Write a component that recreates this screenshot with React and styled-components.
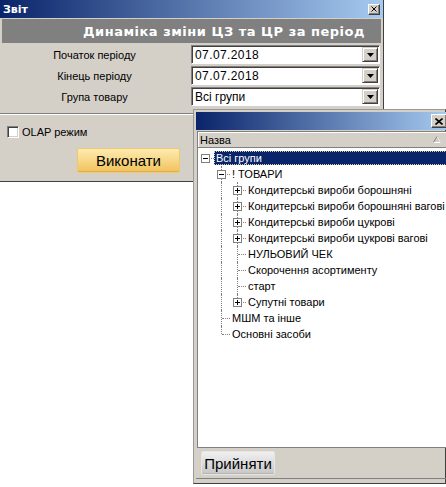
import React from "react";
import styled, { createGlobalStyle } from "styled-components";

const GlobalStyle = createGlobalStyle`
  html, body { margin: 0; padding: 0; background: #fff; }
  body {
    font-family: "Liberation Sans", Arial, sans-serif;
    font-size: 11px;
    color: #000;
  }
`;

const Screen = styled.div`
  position: relative;
  width: 446px;
  height: 487px;
  overflow: hidden;
`;

/* ---------- main report window ---------- */

const MainWindow = styled.div`
  width: 384px;
  height: 182px;
  box-sizing: border-box;
  background: #d4d0c8;
  border-right: 1px solid #404040;
  border-bottom: 1px solid #404040;
  display: flex;
  flex-direction: column;
`;

const TitleBar = styled.div`
  height: 18px;
  flex: none;
  display: flex;
  align-items: center;
  justify-content: space-between;
  padding: 0 ${(p) => p.$padRight}px 0 3px;
  background: linear-gradient(to right, #0a246a, #a6caf0);
  color: #fff;
  font: bold 11px "DejaVu Sans", sans-serif;
`;

const CloseButton = styled.span`
  width: ${(p) => p.$w}px;
  height: ${(p) => p.$h}px;
  box-sizing: border-box;
  background: #d4d0c8;
  border: 1px solid;
  border-color: #fff #404040 #404040 #fff;
  box-shadow: inset -1px -1px #808080;
  display: flex;
  align-items: center;
  justify-content: center;
`;

const ReportHeader = styled.div`
  margin: 1px 2px 0;
  height: 24px;
  background: #808080;
  color: #fff;
  display: flex;
  align-items: center;
  justify-content: flex-end;
  padding-right: 16px;
  font: bold 13px "DejaVu Sans", sans-serif;
  letter-spacing: 0.5px;
`;

const ParamGrid = styled.div`
  margin-top: 2px;
  display: grid;
  grid-template-columns: 189px 189px;
  column-gap: 2px;
  row-gap: 2px;
  grid-auto-rows: 19px;
`;

const ParamLabel = styled.div`
  display: flex;
  align-items: center;
  justify-content: center;
  font-size: 11px;
`;

const Combo = styled.div`
  box-sizing: border-box;
  background: #fff;
  border: 1px solid;
  border-color: #808080 #fff #fff #808080;
  box-shadow: inset 1px 1px #404040;
  display: flex;
  align-items: center;
  padding: 1px 1px 1px 3px;
`;

const ComboText = styled.span`
  flex: 1;
  font-size: 12px;
  letter-spacing: ${(p) => (p.$digits ? "0.4px" : "0")};
  white-space: nowrap;
`;

const ComboArrow = styled.span`
  width: 16px;
  height: 15px;
  box-sizing: border-box;
  background: #d4d0c8;
  border: 1px solid;
  border-color: #d4d0c8 #404040 #404040 #d4d0c8;
  box-shadow: inset 1px 1px #fff, inset -1px -1px #808080;
  display: flex;
  align-items: center;
  justify-content: center;
`;

const Groove = styled.div`
  margin-top: 7px;
  border-top: 1px solid #808080;
  border-bottom: 1px solid #fff;
`;

const CheckRow = styled.label`
  margin-top: 11px;
  padding-left: 7px;
  display: flex;
  align-items: center;
  gap: 3px;
  font-size: 11px;
`;

const CheckBox = styled.span`
  width: 12px;
  height: 12px;
  box-sizing: border-box;
  background: #fff;
  border: 1px solid;
  border-color: #808080 #fff #fff #808080;
  box-shadow: inset 1px 1px #404040, inset -1px -1px #d4d0c8;
`;

const ButtonRow = styled.div`
  margin-top: 10px;
  padding-left: 77px;
  display: flex;
`;

const GoldButton = styled.div`
  width: 103px;
  height: 25px;
  box-sizing: border-box;
  border: 1px solid #efc873;
  border-radius: 2px;
  background: linear-gradient(#fdebb0, #f8d98a 45%, #f0c25c);
  box-shadow: inset 0 -1px #e4ad45;
  display: flex;
  align-items: center;
  justify-content: center;
  font-size: 15px;
`;

/* ---------- group picker popup ---------- */

const Popup = styled.div`
  position: absolute;
  left: 193px;
  top: 109px;
  width: 253px;
  height: 375px;
  box-sizing: border-box;
  background: #d4d0c8;
  border: 1px solid;
  border-color: #9a9a9a #404040 #404040 #9a9a9a;
  padding: 2px 3px 4px 2px;
  display: flex;
`;

const PopupBody = styled.div`
  flex: 1;
  display: flex;
  flex-direction: column;
  border-right: 1px solid #808080;
  border-bottom: 1px solid #808080;
`;

const ListBox = styled.div`
  flex: 1;
  margin: 1px 0 0 1px;
  background: #fff;
  border: 1px solid #808080;
  overflow: hidden;
  display: flex;
  flex-direction: column;
`;

const ColumnHeader = styled.div`
  height: 16px;
  flex: none;
  box-sizing: border-box;
  background: #d4d0c8;
  border-right: 1px solid #808080;
  border-bottom: 1px solid #808080;
  box-shadow: inset 1px 1px #fff;
  display: flex;
  align-items: center;
  justify-content: space-between;
  padding: 0 5px 0 2px;
  font-size: 11px;
`;

const Tree = styled.div`
  padding-top: 2px;
`;

const TreeRow = styled.div`
  height: 16px;
  display: flex;
  align-items: center;
  white-space: nowrap;
`;

const Guide = styled.span`
  position: relative;
  flex: none;
  width: 16px;
  height: 16px;
  &::before {
    content: "";
    display: ${(p) => (p.$up || p.$down ? "block" : "none")};
    position: absolute;
    left: 7px;
    top: ${(p) => (p.$up ? 0 : 8)}px;
    bottom: ${(p) => (p.$down ? 0 : 8)}px;
    border-left: 1px dotted #808080;
  }
  &::after {
    content: "";
    display: ${(p) => (p.$h ? "block" : "none")};
    position: absolute;
    left: 8px;
    right: 0;
    top: 8px;
    border-top: 1px dotted #808080;
  }
`;

const Expander = styled.svg`
  position: absolute;
  left: 3px;
  top: 4px;
  z-index: 1;
`;

const NodeLabel = styled.span`
  flex: ${(p) => (p.$selected ? 1 : "none")};
  height: 14px;
  box-sizing: border-box;
  padding: 0 1px;
  line-height: 12px;
  font-size: 11px;
  border: 1px dotted ${(p) => (p.$selected ? "#d8cfa0" : "transparent")};
  background: ${(p) => (p.$selected ? "#0a246a" : "transparent")};
  color: ${(p) => (p.$selected ? "#fff" : "#000")};
`;

const Footer = styled.div`
  height: 30px;
  flex: none;
  box-sizing: border-box;
  padding: 3px 5px;
  display: flex;
  align-items: flex-start;
`;

const GreyButton = styled.div`
  width: 74px;
  height: 24px;
  box-sizing: border-box;
  border: 1px solid #e6e6e6;
  border-radius: 2px;
  background: linear-gradient(#f0f0f0, #dcdcdc 50%, #c6c6c6);
  box-shadow: inset 0 -1px #b4b4b4;
  display: flex;
  align-items: center;
  justify-content: center;
  font-size: 15px;
`;

/* ---------- data ---------- */

const groups = {
  label: "Всі групи",
  selected: true,
  open: true,
  children: [
    {
      label: "! ТОВАРИ",
      open: true,
      children: [
        { label: "Кондитерські вироби борошняні", children: [] },
        { label: "Кондитерські вироби борошняні вагові", children: [] },
        { label: "Кондитерські вироби цукрові", children: [] },
        { label: "Кондитерські вироби цукрові вагові", children: [] },
        { label: "НУЛЬОВИЙ ЧЕК" },
        { label: "Скорочення асортименту" },
        { label: "старт" },
        { label: "Супутні товари", children: [] },
      ],
    },
    { label: "МШМ та інше" },
    { label: "Основні засоби" },
  ],
};

const flatten = (node, depth, guides, isLast, out) => {
  out.push({ ...node, depth, guides, isLast });
  if (node.open && node.children) {
    node.children.forEach((child, i) =>
      flatten(child, depth + 1, [...guides, !isLast], i === node.children.length - 1, out)
    );
  }
  return out;
};

const rows = flatten(groups, 0, [], true, []);

const DownArrow = () => (
  <svg width="7" height="4" viewBox="0 0 7 4">
    <path d="M0 0h7L3.5 4z" fill="#000" />
  </svg>
);

const SmallX = () => (
  <svg width="6" height="6" viewBox="0 0 6 6">
    <path d="M0.5 0.5l5 5M5.5 0.5l-5 5" stroke="#000" strokeWidth="1" />
  </svg>
);

const BoldX = () => (
  <svg width="8" height="7" viewBox="0 0 8 7">
    <path d="M0.5 0.5l7 6M7.5 0.5l-7 6" stroke="#000" strokeWidth="1.6" />
  </svg>
);

const SortMark = () => (
  <svg width="8" height="7" viewBox="0 0 8 7">
    <path d="M4 0.5L0.5 6.5h7z" fill="none" stroke="#808080" />
    <path d="M0.5 6.5h7L4 0.5" fill="none" stroke="#fff" />
  </svg>
);

const Box = ({ plus }) => (
  <Expander width="9" height="9" viewBox="0 0 9 9">
    <rect x="0.5" y="0.5" width="8" height="8" fill="#fff" stroke="#808080" />
    <path d="M2 4.5h5" stroke="#000" />
    {plus && <path d="M4.5 2v5" stroke="#000" />}
  </Expander>
);

const TreeNode = ({ node }) => {
  const ancestorCells = node.guides.slice(0, node.depth).map((hasNext, k) => (
    <Guide key={k} $up={k > 0 && hasNext} $down={k > 0 && hasNext} />
  ));
  const hasKids = !!node.children;
  return (
    <TreeRow>
      {ancestorCells}
      <Guide $up={node.depth > 0} $down={node.depth > 0 && !node.isLast} $h>
        {hasKids && <Box plus={!node.open} />}
      </Guide>
      <NodeLabel $selected={node.selected}>{node.label}</NodeLabel>
    </TreeRow>
  );
};

const params = [
  { label: "Початок періоду", value: "07.07.2018", digits: true },
  { label: "Кінець періоду", value: "07.07.2018", digits: true },
  { label: "Група товару", value: "Всі групи" },
];

export default function App() {
  return (
    <Screen>
      <GlobalStyle />
      <MainWindow>
        <TitleBar $padRight={3}>
          <span>Звіт</span>
          <CloseButton $w={12} $h={11}>
            <SmallX />
          </CloseButton>
        </TitleBar>
        <ReportHeader>Динаміка зміни ЦЗ та ЦР за період</ReportHeader>
        <ParamGrid>
          {params.map((p) => (
            <React.Fragment key={p.label}>
              <ParamLabel>{p.label}</ParamLabel>
              <Combo>
                <ComboText $digits={p.digits}>{p.value}</ComboText>
                <ComboArrow>
                  <DownArrow />
                </ComboArrow>
              </Combo>
            </React.Fragment>
          ))}
        </ParamGrid>
        <Groove />
        <CheckRow>
          <CheckBox />
          OLAP режим
        </CheckRow>
        <ButtonRow>
          <GoldButton>Виконати</GoldButton>
        </ButtonRow>
      </MainWindow>

      <Popup>
        <PopupBody>
          <TitleBar $padRight={1}>
            <span />
            <CloseButton $w={16} $h={14}>
              <BoldX />
            </CloseButton>
          </TitleBar>
          <ListBox>
            <ColumnHeader>
              <span>Назва</span>
              <SortMark />
            </ColumnHeader>
            <Tree>
              {rows.map((node) => (
                <TreeNode key={node.label} node={node} />
              ))}
            </Tree>
          </ListBox>
          <Footer>
            <GreyButton>Прийняти</GreyButton>
          </Footer>
        </PopupBody>
      </Popup>
    </Screen>
  );
}
